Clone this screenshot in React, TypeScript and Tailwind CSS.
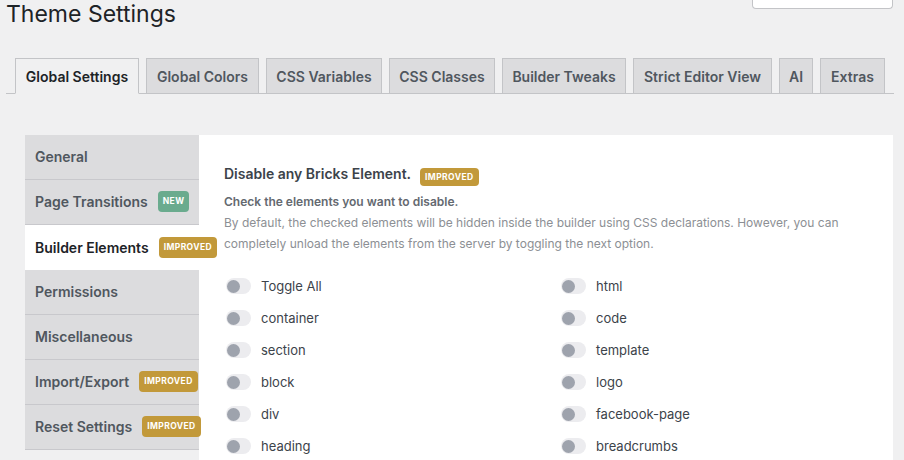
import React from "react";

const tabs: { label: string; width: string; active?: boolean }[] = [
  { label: "Global Settings", width: "w-[124px]", active: true },
  { label: "Global Colors", width: "w-[113px]" },
  { label: "CSS Variables", width: "w-[116px]" },
  { label: "CSS Classes", width: "w-[106px]" },
  { label: "Builder Tweaks", width: "w-[124px]" },
  { label: "Strict Editor View", width: "w-[139px]" },
  { label: "AI", width: "w-[34px]" },
  { label: "Extras", width: "w-[65px]" },
];

type Badge = "new" | "improved";

const menu: { label: string; badge?: Badge; active?: boolean }[] = [
  { label: "General" },
  { label: "Page Transitions", badge: "new" },
  { label: "Builder Elements", badge: "improved", active: true },
  { label: "Permissions" },
  { label: "Miscellaneous" },
  { label: "Import/Export", badge: "improved" },
  { label: "Reset Settings", badge: "improved" },
];

const leftElements = ["Toggle All", "container", "section", "block", "div", "heading"];
const rightElements = ["html", "code", "template", "logo", "facebook-page", "breadcrumbs"];

const Pill: React.FC<{ kind: Badge; small?: boolean }> = ({ kind, small }) => (
  <span
    className={`inline-flex items-center justify-center rounded-[4px] px-[5px] text-[8.5px] font-bold tracking-[0.4px] text-white ${
      small ? "h-[18px]" : "h-[21px]"
    } ${kind === "new" ? "bg-[#6aab8e]" : "bg-[#c2993a]"}`}
  >
    {kind === "new" ? "NEW" : "IMPROVED"}
  </span>
);

const Toggle: React.FC<{ label: string }> = ({ label }) => (
  <div className="flex h-[32px] items-center gap-[10px]">
    <span className="flex h-[16px] w-[25px] items-center rounded-full bg-[#ececef] px-[1px]">
      <span className="h-[13px] w-[13px] rounded-full bg-[#9ea3ad]" />
    </span>
    <span className="text-[13px] text-[#3c434a]">{label}</span>
  </div>
);

const App: React.FC = () => {
  return (
    <div className="min-h-screen w-full overflow-hidden bg-[#f0f0f1] font-['Inter',sans-serif]">
      <div className="flex items-start justify-between">
        <h1 className="pl-[6px] text-[23px] leading-[29px] font-normal text-[#1d2327]">Theme Settings</h1>
        <div className="mr-[11px] h-[9px] w-[141px] rounded-b-[4px] border border-t-0 border-[#c3c4c7] bg-white" />
      </div>

      <div className="mt-[29px] ml-[6px] mr-[10px] flex h-[36px] gap-[7px] border-b border-[#c3c4c7] pl-[9px]">
        {tabs.map((t) => (
          <div
            key={t.label}
            className={`${t.width} -mb-px flex h-[36px] items-center justify-center border border-[#c3c4c7] text-[14px] font-semibold ${
              t.active ? "border-b-[#f0f0f1] bg-[#f0f0f1] text-[#1d2327]" : "bg-[#dcdcde] text-[#50575e]"
            }`}
          >
            {t.label}
          </div>
        ))}
      </div>

      <div className="mt-[41px] ml-[25px] mr-[11px] flex">
        <div className="relative z-10 w-[174px] shrink-0">
          {menu.map((m) => (
            <div
              key={m.label}
              className={`flex h-[45px] items-center gap-[10px] pl-[10px] pb-[1px] text-[14px] font-semibold whitespace-nowrap ${
                m.active ? "bg-white text-[#1d2327]" : "border-b border-[#c8c8cc] bg-[#dcdcde] text-[#50575e]"
              }`}
            >
              <span>{m.label}</span>
              {m.badge && <Pill kind={m.badge} />}
            </div>
          ))}
        </div>

        <div className="min-h-[330px] flex-1 bg-white pt-[29px] pl-[25px]">
          <div className="flex items-start gap-[9px]">
            <h2 className="text-[14px] leading-[20px] font-semibold text-[#3c434a]">Disable any Bricks Element.</h2>
            <span className="-mt-[2px]">
              <Pill kind="improved" small />
            </span>
          </div>
          <p className="mt-[6px] text-[12px] leading-[20px] font-semibold text-[#646970]">
            Check the elements you want to disable.
          </p>
          <p className="text-[12px] leading-[21px] text-[#8c8f94]">
            By default, the checked elements will be hidden inside the builder using CSS declarations. However, you can
            <br />
            completely unload the elements from the server by toggling the next option.
          </p>

          <div className="mt-[16px] grid grid-cols-[335px_1fr] pl-[2px]">
            <div>
              {leftElements.map((e) => (
                <Toggle key={e} label={e} />
              ))}
            </div>
            <div>
              {rightElements.map((e) => (
                <Toggle key={e} label={e} />
              ))}
            </div>
          </div>
        </div>
      </div>
    </div>
  );
};

export default App;
